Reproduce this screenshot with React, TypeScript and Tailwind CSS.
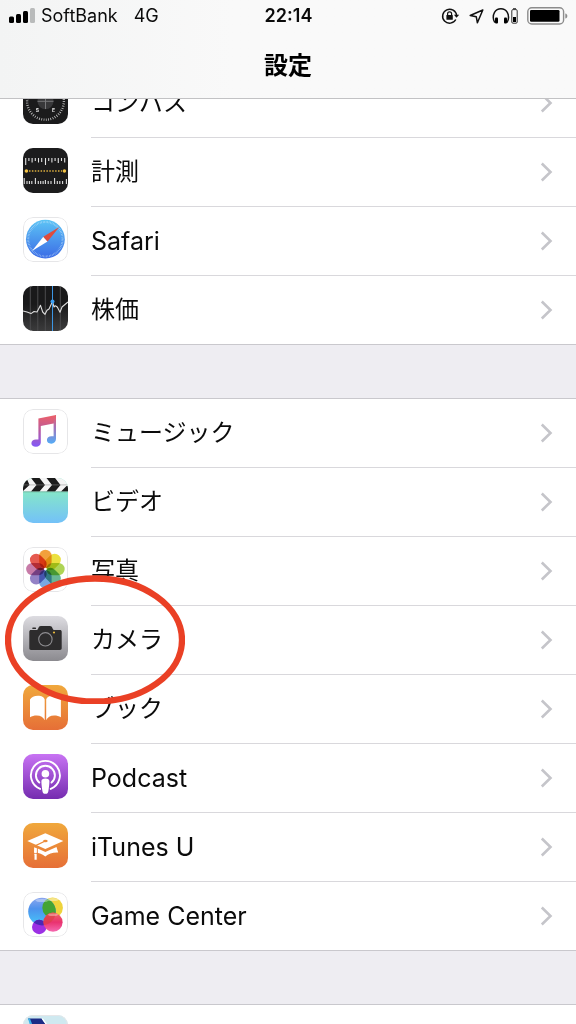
import React from "react";

interface RowItem {
  label: string;
  latin?: boolean;
  icon: React.ReactNode;
  circled?: boolean;
}

function Tile({ fill, outlined, children }: { fill: string; outlined?: boolean; children?: React.ReactNode }) {
  return (
    <svg viewBox="0 0 45 45" className="size-[45px] shrink-0 overflow-hidden rounded-[10px]" aria-hidden="true">
      <defs>
        <linearGradient id="orange" x1="0" y1="0" x2="0" y2="1">
          <stop offset="0" stopColor="#f0a83c" />
          <stop offset="1" stopColor="#e66f37" />
        </linearGradient>
        <linearGradient id="purple" x1="0" y1="0" x2="0" y2="1">
          <stop offset="0" stopColor="#c873f3" />
          <stop offset="1" stopColor="#752cb0" />
        </linearGradient>
        <linearGradient id="silver" x1="0" y1="0" x2="0" y2="1">
          <stop offset="0" stopColor="#dddce1" />
          <stop offset="1" stopColor="#8b8a8f" />
        </linearGradient>
        <linearGradient id="aqua" x1="0" y1="0.3" x2="0" y2="1">
          <stop offset="0" stopColor="#85e6c9" />
          <stop offset="1" stopColor="#73c1f8" />
        </linearGradient>
        <linearGradient id="night" x1="0" y1="0" x2="0" y2="1">
          <stop offset="0.4" stopColor="#19191a" />
          <stop offset="1" stopColor="#3b3b3c" />
        </linearGradient>
      </defs>
      <rect width="45" height="45" fill={fill} />
      {children}
      {outlined && <rect x="0.5" y="0.5" width="44" height="44" rx="9.5" fill="none" stroke="#e6e6e8" />}
    </svg>
  );
}

const compassIcon = (
  <Tile fill="#1b1b1c">
    <circle cx="22.5" cy="22.3" r="18.4" fill="none" stroke="#d8d8d8" strokeWidth="2.4" strokeDasharray="0.7 1.6" />
    <circle cx="22.5" cy="22.3" r="8" fill="#38383a" />
    <path d="M14.5 22.3h16M22.5 14v16" stroke="#77777a" strokeWidth="1" />
    <text x="14.3" y="32.5" fontSize="5" fontWeight="700" textAnchor="middle" fill="#e8e8e8">S</text>
    <text x="30.6" y="32.5" fontSize="5" fontWeight="700" textAnchor="middle" fill="#e8e8e8">E</text>
  </Tile>
);

const measureIcon = (
  <Tile fill="#1c1c1d">
    <path
      d="M2.7 10v7M5.9 10v3M9.1 10v4.5M12.3 10v3M15.5 10v4.5M18.7 10v4M22.5 10v7M25.7 10v3M28.9 10v4.5M32.1 10v3M35.3 10v5M38.5 10v3M41.7 10v4.5M1.2 30v6M4 33v3M6.4 33v3M8.8 33v3M12.4 30v6M15.3 33v3M17.7 33v3M20.1 33v3M22.4 32v4M25.2 33v3M28 33v3M31.6 30v6M34.3 33v3M36.8 33v3M39.6 33v3M43.4 31v5"
      stroke="#e2e2e2"
      strokeWidth="1.1"
    />
    <path d="M6 23h33" stroke="#dcae3d" strokeWidth="1.4" strokeDasharray="1.5 1.4" />
    <circle cx="3.4" cy="23" r="1.8" fill="#f3c345" />
    <circle cx="41.4" cy="23" r="1.8" fill="#f3c345" />
  </Tile>
);

const safariIcon = (
  <Tile fill="#fff" outlined>
    <defs>
      <linearGradient id="safari" x1="0" y1="0" x2="0" y2="1">
        <stop offset="0" stopColor="#5cc4f5" />
        <stop offset="1" stopColor="#3b6be6" />
      </linearGradient>
    </defs>
    <circle cx="22.4" cy="22.2" r="19.4" fill="url(#safari)" />
    <circle cx="22.4" cy="22.2" r="17.2" fill="none" stroke="#c6e2fa" strokeWidth="2" strokeDasharray="0.5 1" opacity="0.8" />
    <path d="M9 34 20.3 19.8l4.2 4.6z" fill="#fff" />
    <path d="M36.3 10 20.3 19.8l4.2 4.6z" fill="#e04b3c" />
  </Tile>
);

const stocksIcon = (
  <Tile fill="url(#night)">
    <path d="M7.3 0v45M14.8 0v45M22.3 0v45M37.3 0v45" stroke="#4c4c4e" strokeWidth="1" />
    <path
      d="M0 25l4 1 4 1.6 3-2.1 3 .5 3.5-6.7L19.7 26l2.3 2.3 2-4 2-1.3 3.5-7.5L31 21l1.3-1.3 2 1.3 2.7 5.3L39 21l6-5"
      fill="none"
      stroke="#dcdcdc"
      strokeWidth="1.1"
      strokeLinejoin="round"
    />
    <path d="M29.5 0v45" stroke="#3c96e4" strokeWidth="1" />
    <circle cx="29.5" cy="15.4" r="2" fill="#3da0f4" />
  </Tile>
);

const musicIcon = (
  <Tile fill="#fff" outlined>
    <defs>
      <linearGradient id="noteA" gradientUnits="userSpaceOnUse" x1="24" y1="6" x2="22" y2="38">
        <stop offset="0" stopColor="#ed6068" />
        <stop offset="0.45" stopColor="#bd5b9a" />
        <stop offset="1" stopColor="#8358f6" />
      </linearGradient>
      <linearGradient id="noteB" gradientUnits="userSpaceOnUse" x1="0" y1="8" x2="0" y2="34">
        <stop offset="0" stopColor="#e65f70" />
        <stop offset="0.4" stopColor="#a473b9" />
        <stop offset="1" stopColor="#56aaf5" />
      </linearGradient>
    </defs>
    <path d="M15.4 9.4 33 6v8L17.8 17v16.5c0 2.5-2 4.3-4.9 4.3-2.8 0-4.5-1.400-4.5-3.500 0-2.300 1.900-3.900 4.400-3.900h2.600z" fill="url(#noteA)" />
    <path d="M30.6 8 33 6v24c0 2.700-2 4.700-4.800 4.700-2.600 0-4.300-1.400-4.300-3.600 0-2.300 1.900-3.900 4.300-3.900h2.400z" fill="url(#noteB)" />
  </Tile>
);

const videoIcon = (
  <Tile fill="url(#aqua)">
    <rect width="45" height="13.600" fill="#f4f4f4" />
    <path d="M0 3.500 3.500 0 6.500 7 0 13zM8 0h8.500l5.500 7-5.500 6.600H8L13.500 7zM23.500 0H32l5.500 7-5.500 6.600h-8.500L29 7zM38 13.600 43.500 8H45v5.600z" fill="#1b1b1b" />
    <path d="M0 6.900h45" stroke="#8d8d8d" strokeWidth="0.500" />
    <path d="M0 13.800h45" stroke="#5a9b85" strokeWidth="0.600" />
  </Tile>
);

const petals = ["#f2a03c", "#ebe040", "#aed455", "#68b795", "#78a8e2", "#9482c6", "#c77ba8", "#e55a50"];

const photosIcon = (
  <Tile fill="#fff" outlined>
    {petals.map((color, i) => (
      <rect
        key={color}
        x="16.2"
        y="2.800"
        width="12.400"
        height="18.500"
        rx="6.200"
        fill={color}
        transform={`rotate(${i * 45} 22.4 22.1)`}
        className="mix-blend-multiply"
      />
    ))}
    <circle cx="22.400" cy="22.100" r="1.300" fill="#fff" />
  </Tile>
);

const cameraIcon = (
  <Tile fill="url(#silver)">
    <path
      d="M8 14h5.500c1 0 1.300-.6 1.800-1.800.6-1.500 1.200-2.200 2.600-2.200h9c1.400 0 2 .7 2.600 2.200.5 1.200.8 1.800 1.800 1.800H37c1 0 1.700.7 1.700 1.700v16.500c0 1-.7 1.700-1.700 1.700H8c-1 0-1.700-.7-1.700-1.700V15.700C6.300 14.700 7 14 8 14z"
      fill="#2d2c2d"
    />
    <rect x="9.300" y="11.600" width="3.700" height="1.400" rx="0.600" fill="#2d2c2d" />
    <circle cx="22.400" cy="23.300" r="6.700" fill="none" stroke="#8e8d91" strokeWidth="1.100" />
    <circle cx="31" cy="16.500" r="1.100" fill="#e4b53b" />
  </Tile>
);

const booksIcon = (
  <Tile fill="url(#orange)">
    <path d="M21.700 35.300V14.500c-.5-2.300-3.300-3.800-6.800-3.800-3.800 0-6.600 1.600-7.900 3.800v17.700c1.800-1 4.100-1.700 6.800-1.700 3.800 0 6.600 1.700 7.900 4.800z" fill="#fff" />
    <path d="M23.200 35.300V14.500c.5-2.300 3.300-3.800 6.800-3.800 3.800 0 6.600 1.600 7.900 3.800v17.700c-1.800-1-4.100-1.700-6.800-1.700-3.800 0-6.600 1.700-7.900 4.800z" fill="#fff" />
  </Tile>
);

const podcastIcon = (
  <Tile fill="url(#purple)">
    <g fill="none" stroke="#fff" strokeWidth="1.900" strokeLinecap="round">
      <path d="M17.100 34.900a14.500 14.500 0 1 1 10.600 0" />
      <path d="M16.300 28.600a9.500 9.500 0 1 1 12.200 0" />
    </g>
    <circle cx="22.400" cy="19.800" r="3.800" fill="#fff" />
    <path d="M18.400 27.200c0-1.800 1.500-2.700 4-2.700s4 .9 4 2.700c0 2.800-.5 6.600-1 9.700-.3 2-1.100 2.900-3 2.900s-2.700-.9-3-2.900c-.5-3.100-1-6.900-1-9.700z" fill="#fff" />
  </Tile>
);

const itunesIcon = (
  <Tile fill="url(#orange)">
    <path d="m4.300 18 18-7.800L40.300 18l-18 8z" fill="#fff" />
    <path d="M11.500 24 22.300 29l11.200-5 1.700 5.500c-5-.3-9.500 1-12.900 4-3.300-2.700-7-4-11.300-4z" fill="#fff" />
    <path d="M22.300 18 13 22.500v3" fill="none" stroke="#ec8b39" strokeWidth="1.300" />
    <ellipse cx="22.400" cy="18" rx="2.300" ry="1.200" fill="#ec8b39" />
    <path d="M14.300 25v12" stroke="#e9803a" strokeWidth="1" />
    <path d="M12.400 25v7M12.600 31v5.800" stroke="#fff" strokeWidth="2.200" />
    <path d="M10.800 30.500h3.600" stroke="#e9803a" strokeWidth="0.700" />
  </Tile>
);

const gameCenterIcon = (
  <Tile fill="#fff" outlined>
    <defs>
      <linearGradient id="bubbleBlue" x1="0" y1="0" x2="0" y2="1">
        <stop offset="0" stopColor="#8ba6ee" />
        <stop offset="0.4" stopColor="#4d92ed" />
        <stop offset="1" stopColor="#46c8fa" />
      </linearGradient>
      <linearGradient id="bubbleRed" x1="0" y1="0" x2="0" y2="1">
        <stop offset="0" stopColor="#ef6a61" />
        <stop offset="0.5" stopColor="#e9326f" />
        <stop offset="1" stopColor="#f569b1" />
      </linearGradient>
      <clipPath id="blueClip">
        <circle cx="19" cy="19.600" r="13.800" />
      </clipPath>
    </defs>
    <circle cx="29.600" cy="15.700" r="10.300" fill="#eed33c" />
    <circle cx="19" cy="19.600" r="13.800" fill="url(#bubbleBlue)" />
    <circle cx="29.600" cy="15.700" r="10.300" fill="#43a434" clipPath="url(#blueClip)" />
    <circle cx="16.200" cy="35" r="7.200" fill="#9c30e4" />
    <circle cx="16.200" cy="35" r="7.200" fill="#4b28b5" clipPath="url(#blueClip)" />
    <circle cx="30" cy="30.200" r="9.600" fill="url(#bubbleRed)" />
    <circle cx="30" cy="30.200" r="9.600" fill="#d8403f" opacity="0.600" clipPath="url(#blueClip)" />
    <ellipse cx="19" cy="8.500" rx="6.500" ry="1.600" fill="#fff" opacity="0.350" />
    <ellipse cx="30" cy="7.500" rx="5.500" ry="1.500" fill="#fff" opacity="0.400" />
    <ellipse cx="30" cy="22.800" rx="5" ry="1.300" fill="#fff" opacity="0.350" />
  </Tile>
);

const airlineIcon = (
  <Tile fill="#cfe9f0" outlined>
    <path d="M5 3.500h13.500L35 27H19z" fill="#1c2c86" />
    <path d="M5 3.500h2L16 27h-4z" fill="#3db0e6" />
    <path d="M18.500 3.500h1.500L37 27h-2z" fill="#fff" />
  </Tile>
);

const toolRows: RowItem[] = [
  { label: "コンパス", icon: compassIcon },
  { label: "計測", icon: measureIcon },
  { label: "Safari", latin: true, icon: safariIcon },
  { label: "株価", icon: stocksIcon },
];

const mediaRows: RowItem[] = [
  { label: "ミュージック", icon: musicIcon },
  { label: "ビデオ", icon: videoIcon },
  { label: "写真", icon: photosIcon },
  { label: "カメラ", icon: cameraIcon, circled: true },
  { label: "ブック", icon: booksIcon },
  { label: "Podcast", latin: true, icon: podcastIcon },
  { label: "iTunes U", latin: true, icon: itunesIcon },
  { label: "Game Center", latin: true, icon: gameCenterIcon },
];

function Row({ item }: { item: RowItem }) {
  return (
    <li className="group relative">
      <a href="#" className="flex h-[69px] gap-[23px] pl-[23px]">
        <span className="flex items-center pb-1">{item.icon}</span>
        <span className="flex flex-1 items-center justify-between border-b border-[#d9d8dc] pr-[23px] group-last:border-transparent">
          <span className={item.latin ? "text-[25px] leading-8" : "text-2xl leading-8"}>{item.label}</span>
          <svg viewBox="0 0 13 20" className="h-5 w-[13px]" fill="none" stroke="#c5c5ca" strokeWidth="2.6" aria-hidden="true">
            <path d="m1.800 1.500 8.700 8.500-8.700 8.500" />
          </svg>
        </span>
      </a>
      {item.circled && (
        <svg viewBox="0 0 180 130" className="pointer-events-none absolute -top-8 left-[5px] z-10 h-[130px] w-[180px]" aria-hidden="true">
          <ellipse cx="90" cy="66" rx="87" ry="61.5" fill="none" stroke="#ea4025" strokeWidth="6.300" />
        </svg>
      )}
    </li>
  );
}

function Group({ rows }: { rows: RowItem[] }) {
  return (
    <ul className="border-y border-[#c9c8cd] bg-white [&>li:last-child]:-mb-px">
      {rows.map((item) => (
        <Row key={item.label} item={item} />
      ))}
    </ul>
  );
}

function StatusBar() {
  return (
    <div className="grid h-8 grid-cols-[1fr_auto_1fr] items-center pr-2 pl-[9px] text-lg leading-6">
      <div className="flex items-center">
        <svg viewBox="0 0 26 16" className="mr-1.5 h-4 w-[26px]" aria-label="電波強度">
          <rect x="0" y="8.5" width="5" height="6.5" rx="1.5" />
          <rect x="7" y="6" width="5" height="9" rx="1.5" />
          <rect x="14" y="3" width="5" height="12" rx="1.5" />
          <rect x="21" y="0" width="5" height="15" rx="1.5" fill="#b9bbbb" />
        </svg>
        <span>SoftBank</span>
        <span className="ml-4">4G</span>
      </div>
      <time className="font-semibold">22:14</time>
      <div className="flex items-center justify-end">
        <svg viewBox="0 0 18 18" className="mr-2.5 h-[18px] w-[18px]" fill="none" stroke="#111" strokeWidth="1.5" aria-label="画面の向きのロック">
          <path d="M14.800 12.500a7 7 0 1 1 .8-4" />
          <path d="m12.900 7.800 2.600 3 2.600-3z" fill="#111" stroke="none" />
          <rect x="5.400" y="8" width="6.400" height="4.800" rx="0.600" fill="#111" stroke="none" />
          <path d="M6.600 8V6.800a2 2 0 0 1 4 0V8" strokeWidth="1.200" />
        </svg>
        <svg viewBox="0 0 15 15" className="mr-2 size-[15px]" fill="none" stroke="#111" strokeWidth="1.500" strokeLinejoin="round" aria-label="位置情報">
          <path d="M13.800 1 1.200 6.500l6.100 1.300 1.100 6z" />
        </svg>
        <svg viewBox="0 0 27 18" className="mr-2 h-[18px] w-[27px]" aria-label="ヘッドフォンのバッテリー">
          <path d="M2.800 15.500C.8 13 .8 8.300 2.500 5.400a7.400 7.400 0 0 1 12.800 0c1.700 2.900 1.700 7.600-.3 10.100" fill="none" stroke="#111" strokeWidth="1.500" />
          <rect x="3" y="10.500" width="3" height="6" rx="1" />
          <rect x="12" y="10.500" width="3" height="6" rx="1" />
          <rect x="19.800" y="2.600" width="5.400" height="13.600" rx="1.200" fill="none" stroke="#333" strokeWidth="1" />
          <rect x="21" y="1" width="3" height="1.200" fill="#555" />
          <rect x="21" y="10" width="3" height="5" />
        </svg>
        <svg viewBox="0 0 41 18" className="h-[18px] w-[41px]" aria-label="バッテリー">
          <rect x="0.800" y="0.800" width="35.800" height="16.200" rx="4" fill="none" stroke="#8c8c8c" strokeWidth="1.400" />
          <rect x="3" y="3" width="29.500" height="11.800" rx="1.300" />
          <path d="M38.300 6.400c1.300.3 2 1.200 2 2.500s-.7 2.200-2 2.500z" fill="#8c8c8c" />
        </svg>
      </div>
    </div>
  );
}

export default function App() {
  return (
    <div
      lang="ja"
      className="flex h-screen flex-col overflow-hidden bg-[#eeedf2] font-[Inter,'Noto_Sans_CJK_JP',sans-serif] text-[#0b0b0b]"
    >
      <header className="z-20 shrink-0 border-b border-[#c2c2c4] bg-linear-to-r from-[#f3f4f4] to-[#f9f9f9] to-40%">
        <StatusBar />
        <h1 className="pt-4 pb-3.5 text-center text-2xl leading-9 font-bold text-black">設定</h1>
      </header>
      <main className="flex min-h-0 flex-1 flex-col gap-[53px] overflow-hidden">
        <div className="-mt-[31px]">
          <Group rows={toolRows} />
        </div>
        <Group rows={mediaRows} />
        <Group rows={[{ label: "", icon: airlineIcon }]} />
      </main>
    </div>
  );
}
